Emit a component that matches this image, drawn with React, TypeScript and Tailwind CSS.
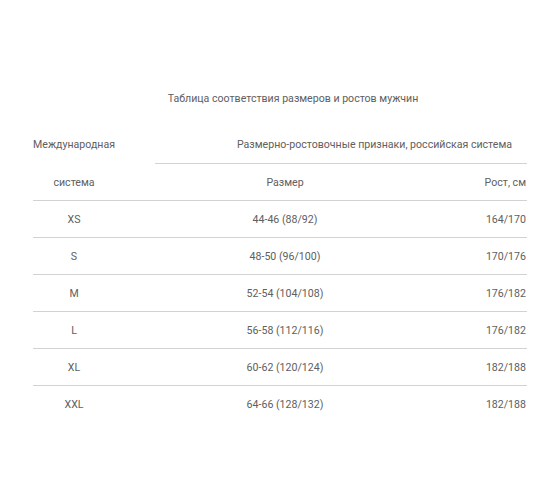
import React from "react";

const rows = [
  ["XS", "44-46 (88/92)", "164/170"],
  ["S", "48-50 (96/100)", "170/176"],
  ["M", "52-54 (104/108)", "176/182"],
  ["L", "56-58 (112/116)", "176/182"],
  ["XL", "60-62 (120/124)", "182/188"],
  ["XXL", "64-66 (128/132)", "182/188"],
];

export default function App() {
  return (
    <div
      className="w-[560px] h-[504px] bg-white text-[#606060] text-[10.6px]"
      style={{ fontFamily: "Roboto, 'Noto Sans', sans-serif" }}
    >
      <div className="w-[494px] mx-auto pt-[90px]">
        <div className="h-[17px] leading-[17px] text-center pl-[26px]">
          Таблица соответствия размеров и ростов мужчин
        </div>
        <div className="mt-[20px] flex h-[37px]">
          <div className="w-[82px] flex items-center justify-center pb-px whitespace-nowrap">
            Международная
          </div>
          <div className="w-[40px]" />
          <div className="w-[372px] border-b border-[#d2d2d2] flex items-center justify-center pl-[67px] whitespace-nowrap">
            Размерно-ростовочные признаки, российская система
          </div>
        </div>
        <div className="flex h-[37px] border-b border-[#d2d2d2] pt-px">
          <div className="w-[82px] flex items-center justify-center">система</div>
          <div className="w-[40px]" />
          <div className="w-[260px] flex items-center justify-center">Размер</div>
          <div className="w-[112px] flex items-center justify-end pr-px">Рост, см</div>
        </div>
        {rows.map((r, i) => (
          <div
            key={r[0]}
            className={
              "flex h-[37px] pt-px " + (i < rows.length - 1 ? "border-b border-[#d2d2d2]" : "")
            }
          >
            <div className="w-[82px] flex items-center justify-center">{r[0]}</div>
            <div className="w-[40px]" />
            <div className="w-[260px] flex items-center justify-center">{r[1]}</div>
            <div className="w-[112px] flex items-center justify-end pr-px">{r[2]}</div>
          </div>
        ))}
      </div>
    </div>
  );
}
